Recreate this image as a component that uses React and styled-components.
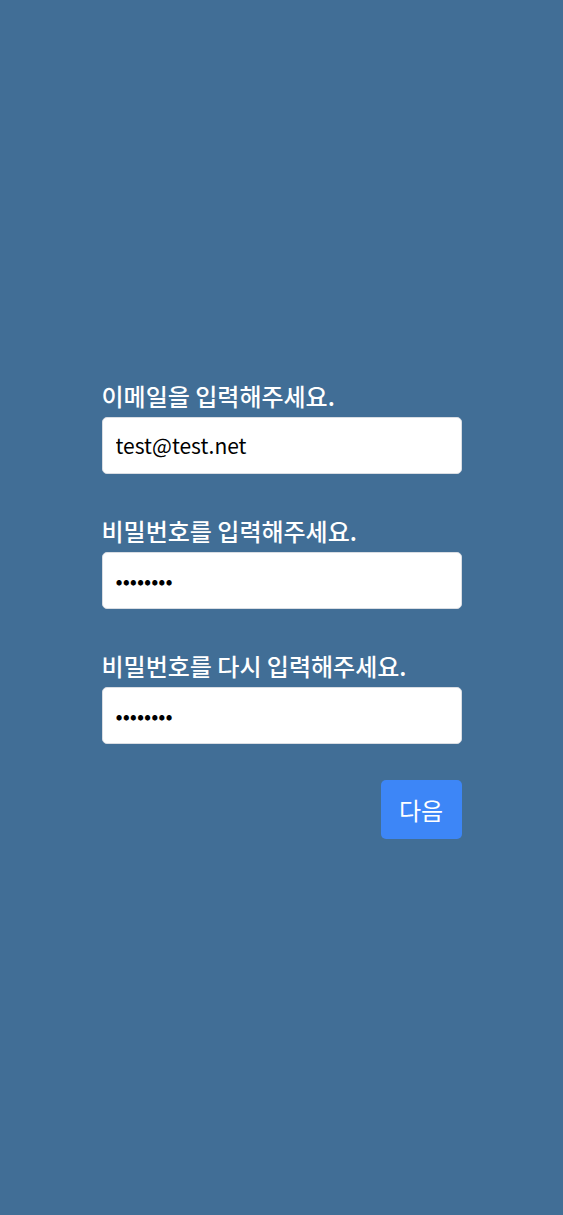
import styled, { createGlobalStyle } from "styled-components";

const GlobalStyle = createGlobalStyle`
  body {
    margin: 0;
    background: #416e96;
    font-family: "Noto Sans CJK KR", "Noto Sans", sans-serif;
  }
`;

const Page = styled.div`
  box-sizing: border-box;
  min-height: 1215px;
  padding-top: 4px;
  display: flex;
  align-items: center;
  justify-content: center;
`;

const Form = styled.form`
  width: 360px;
  display: flex;
  flex-direction: column;
  gap: 42px;
`;

const Field = styled.div`
  display: flex;
  flex-direction: column;
  gap: 6px;
`;

const Label = styled.label`
  color: #fff;
  font-size: 24px;
  font-weight: 500;
  line-height: 30px;
`;

const Input = styled.input`
  box-sizing: border-box;
  height: 57px;
  padding: 0 13px;
  border: 1px solid #d9dde3;
  border-radius: 5px;
  background: #fff;
  font-family: "Noto Sans CJK KR", "Noto Sans", sans-serif;
  font-size: 21px;
  color: #000;
  outline: none;
`;

const Actions = styled.div`
  display: flex;
  justify-content: flex-end;
  margin-top: -6px;
`;

const Button = styled.button`
  width: 81px;
  height: 59px;
  border: none;
  border-radius: 5px;
  background: #3d86f7;
  color: #fff;
  font-family: "Noto Sans CJK KR", "Noto Sans", sans-serif;
  font-size: 24px;
  cursor: pointer;
`;

function App() {
  return (
    <Page>
      <GlobalStyle />
      <Form onSubmit={(e) => e.preventDefault()}>
        <Field>
          <Label>이메일을 입력해주세요.</Label>
          <Input type="email" defaultValue="test@test.net" />
        </Field>
        <Field>
          <Label>비밀번호를 입력해주세요.</Label>
          <Input type="password" defaultValue="12345678" />
        </Field>
        <Field>
          <Label>비밀번호를 다시 입력해주세요.</Label>
          <Input type="password" defaultValue="12345678" />
        </Field>
        <Actions>
          <Button type="submit">다음</Button>
        </Actions>
      </Form>
    </Page>
  );
}

export default App;
